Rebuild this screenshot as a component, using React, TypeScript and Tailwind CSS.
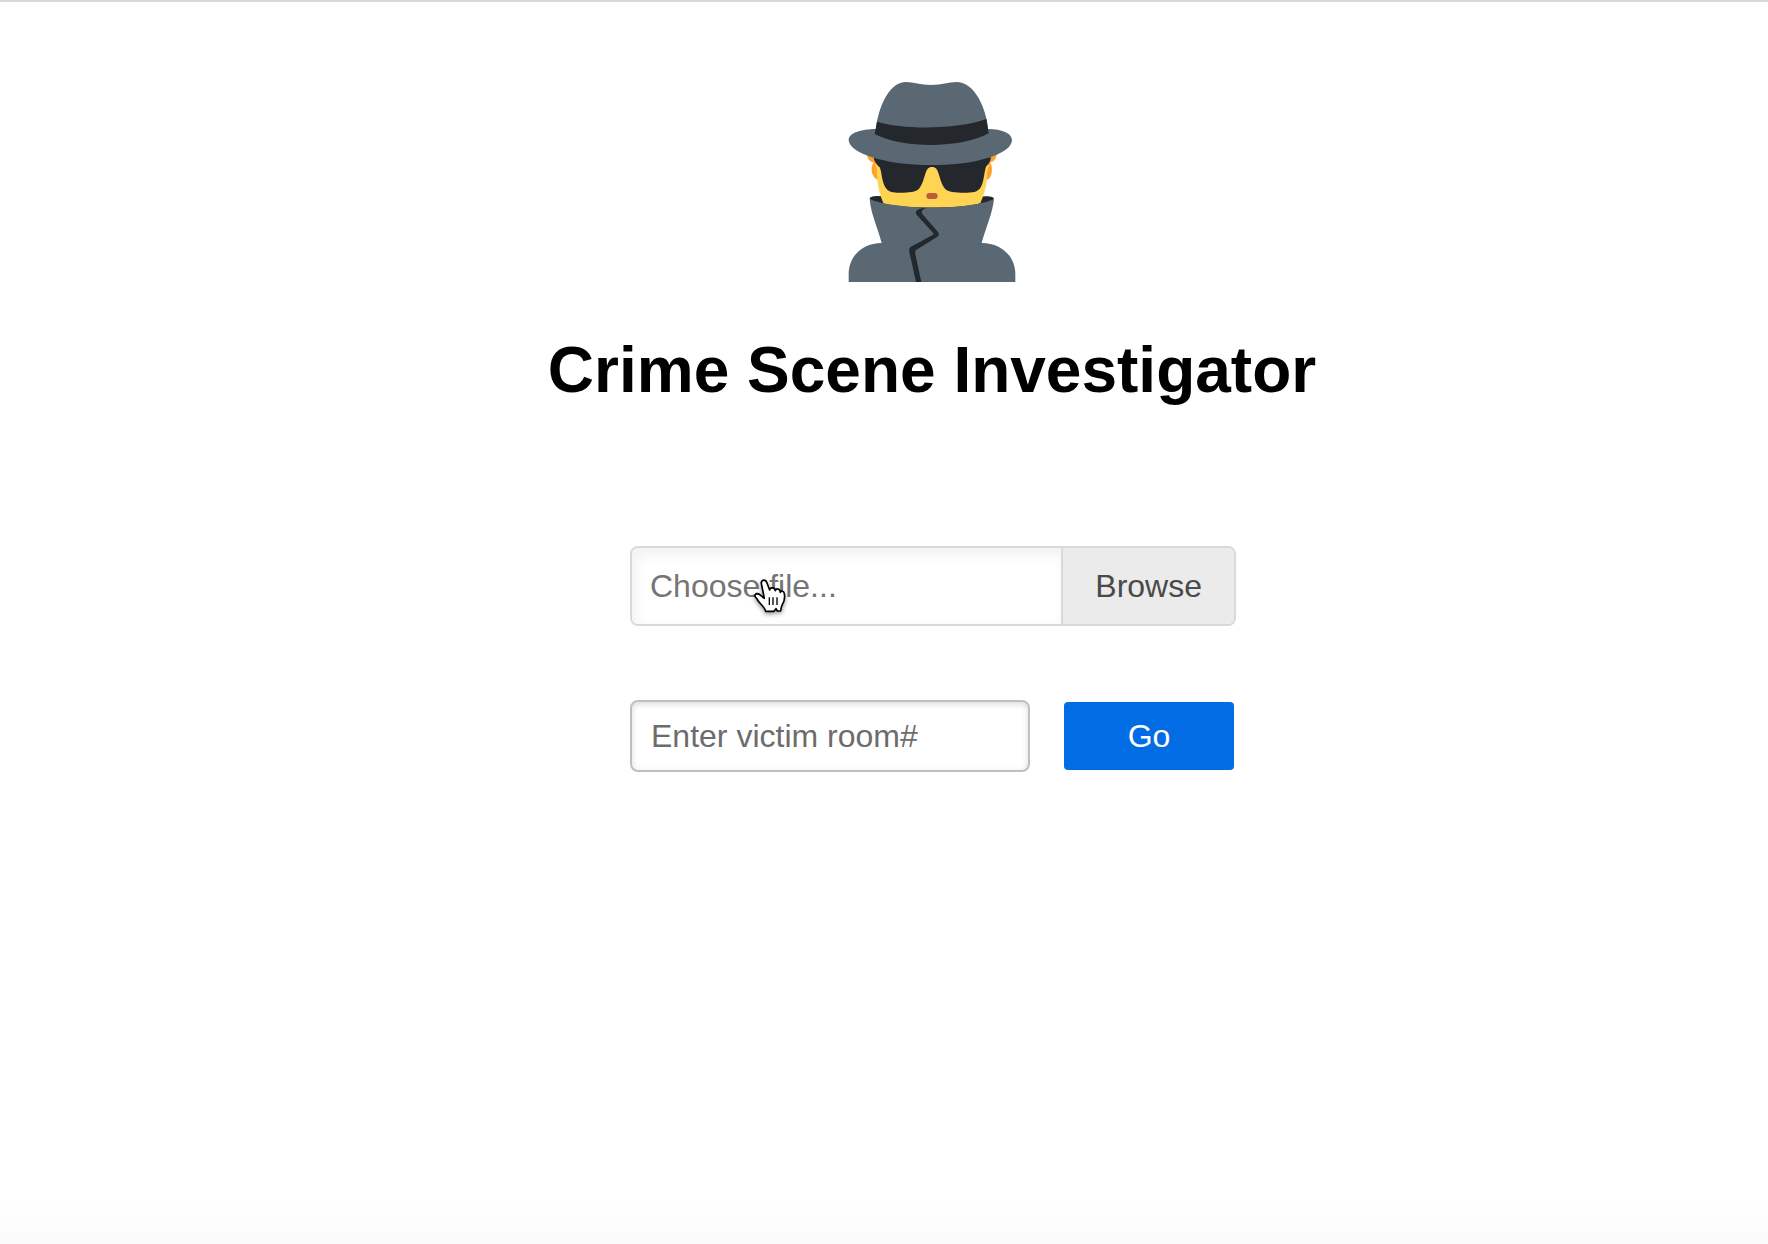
function Detective() {
  return (
    <svg viewBox="6 36 600 600" className="size-[200px]" role="img" aria-label="Detective">
      <path fill="#ffa22b" d="M111 250L500 250C500 266 492 276 480 277C490 290 488 328 468 330L146 330C123 324 120 290 131 278C118 275 111 266 111 250Z" />
      <path fill="#24282d" d="M119 387C119 377 145 377 170 380L445 380C470 377 492 378 492 387C450 425 160 425 119 387Z" />
      <path fill="#ffd452" d="M134 284C150 284 470 284 480 284C472 292 471 310 470 336C466 362 459 380 451 400C400 417 210 417 160 400C150 375 143 350 141 322C141 300 142 292 134 284Z" />
      <path fill="#596872" d="M119 387C190 420 420 422 492 387C488 430 468 470 455 519C515 519 556 560 556 612V636H56V612C56 560 96 519 155 519C142 470 122 430 119 387Z" />
      <path fill="#24282d" d="M291 414C274 413 263 417 258 424C256 428 258 432 261 436L310 490C311 492 311 493 309 494L243 530C238 533 237 539 238 546L258 636H274L256 552C255 544 256 541 262 538L321 501C327 497 328 492 324 486L277 432C272 424 279 416 291 414Z" />
      <path fill="#24282d" d="M131 262L483 262C482 275 475 283 468 290C463 302 463 330 453 350C444 367 427 368 402 368C376 368 354 366 345 356C331 340 328 308 319 296C313 289 299 289 293 296C284 308 281 340 267 356C258 366 237 368 211 368C187 368 174 366 165 350C155 332 155 304 149 292C142 286 132 275 131 262Z" />
      <rect x="289" y="369" width="34" height="18" rx="9" fill="#bf5b3b" />
      <path fill="#596872" d="M56 210C57 189 91 177 140 177H475C515 177 545 189 546 210C545 235 510 256 450 270C380 290 230 290 158 270C99 257 57 235 56 210Z" />
      <path fill="#596872" d="M139 166C150 98 182 36 228 36C250 36 272 45 303 45C336 45 355 36 380 36C427 36 460 96 471 154L476 190H136Z" />
      <path fill="#24282d" d="M141 155C222 180 385 178 469 147L476 190C394 236 218 236 134 192Z" />
    </svg>
  );
}

function HandPointer() {
  return (
    <svg
      viewBox="40 20 108 120"
      className="pointer-events-none absolute top-[29px] left-[121px] h-10 w-9 drop-shadow-[0_2px_2px_rgba(0,0,0,0.4)]"
      aria-hidden="true"
    >
      <path
        fill="#fff"
        stroke="#000"
        strokeWidth="5"
        strokeLinejoin="round"
        d="M66 44C61 29 76 24 82 38L90 59C91 50 105 50 107 61C109 53 121 54 122 66C124 60 133 62 134 70C137 86 133 96 127 105C124 111 124 115 123 122H113L109 115L103 123H78C76 109 59 101 51 84C42 78 46 70 54 70C61 71 67 80 74 84Z"
      />
      <path stroke="#000" strokeWidth="4" d="M89 81V104M100 81V104M112 81V104" />
    </svg>
  );
}

export default function App() {
  return (
    <main className="flex min-h-screen flex-col items-center border-t-2 border-[#d8d7dc] bg-[linear-gradient(to_top,#fbfbfb,#ffffff_48px)] pt-20 pl-24 font-['Liberation_Sans',Arial,sans-serif] text-[32px]">
      <Detective />
      <h1 className="mt-14 text-[64px] leading-[64px] font-bold text-black">Crime Scene Investigator</h1>
      <form className="mt-36 w-full max-w-[608px] pl-0.5" onSubmit={(e) => e.preventDefault()}>
        <div className="relative flex h-20 overflow-hidden rounded-lg border-2 border-[#d9d9d9]">
          <input
            type="text"
            readOnly
            aria-label="File"
            placeholder="Choose file..."
            className="min-w-0 flex-1 cursor-pointer bg-white px-[18px] shadow-[inset_4px_6px_14px_rgba(0,0,0,0.06)] outline-none placeholder:text-[#757575]"
          />
          <button type="button" className="border-l-2 border-[#d9d9d9] bg-[#ebebeb] px-8 text-[#4a4a4a]">
            Browse
          </button>
          <HandPointer />
        </div>
        <div className="mt-[74px] flex items-center gap-[34px]">
          <input
            type="text"
            aria-label="Victim room number"
            placeholder="Enter victim room#"
            className="h-[72px] min-w-0 flex-1 rounded-lg border-2 border-[#bfbfbf] bg-white px-[19px] shadow-[inset_0_2px_6px_rgba(0,0,0,0.15)] outline-none placeholder:text-[#6c6c6c]"
          />
          <button type="submit" className="mr-0.5 h-[68px] w-[170px] rounded bg-[#026ce4] text-white">
            Go
          </button>
        </div>
      </form>
    </main>
  );
}
